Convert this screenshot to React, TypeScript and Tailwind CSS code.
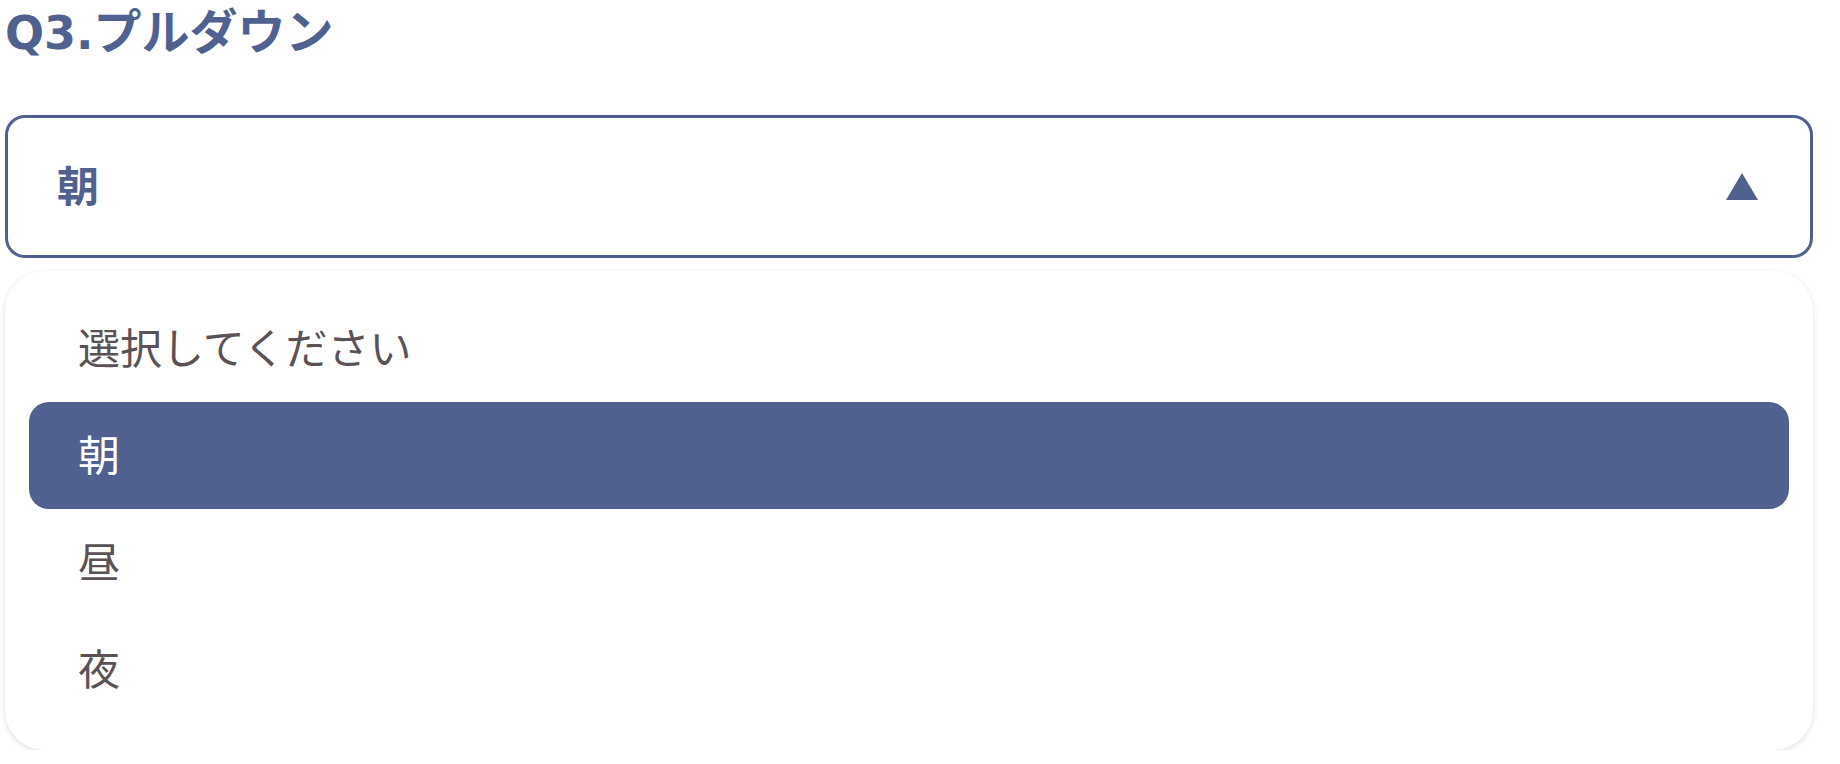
const OPTIONS = ["選択してください", "朝", "昼", "夜"];

const App = () => {
  const selected = "朝";

  return (
    <div className="ml-[5px] w-[1808px] font-['Noto_Sans_CJK_JP',sans-serif]">
      <h2 className="flex h-[56px] items-baseline text-[48px] font-bold leading-[56px] text-[#506190]">
        <span className="font-['DejaVu_Sans','Noto_Sans_CJK_JP',sans-serif] text-[46px]">Q3.</span>
        <span>プルダウン</span>
      </h2>

      <div className="mt-[59px] flex h-[143px] items-center justify-between rounded-[20px] border-[3px] border-[#506190] pb-[7px] pl-[49px] pr-[52px]">
        <span className="text-[42px] font-bold text-[#506190]">{selected}</span>
        <svg width="32" height="27" viewBox="0 0 32 27" className="mt-[7px]">
          <polygon points="16,0 32,27 0,27" fill="#506190" />
        </svg>
      </div>

      <ul className="mt-[13px] rounded-[40px] bg-white px-[24px] pb-[27px] pt-[24px] shadow-[0_2px_6px_rgba(0,0,0,0.12)]">
        {OPTIONS.map((option) => (
          <li
            key={option}
            className={
              option === selected
                ? "flex h-[107px] items-center rounded-[20px] bg-[#506190] pb-[7px] pl-[49px] text-[42px] text-white"
                : "flex h-[107px] items-center rounded-[20px] pb-[7px] pl-[49px] text-[42px] text-[#5a5255]"
            }
          >
            {option}
          </li>
        ))}
      </ul>
    </div>
  );
};

export default App;
